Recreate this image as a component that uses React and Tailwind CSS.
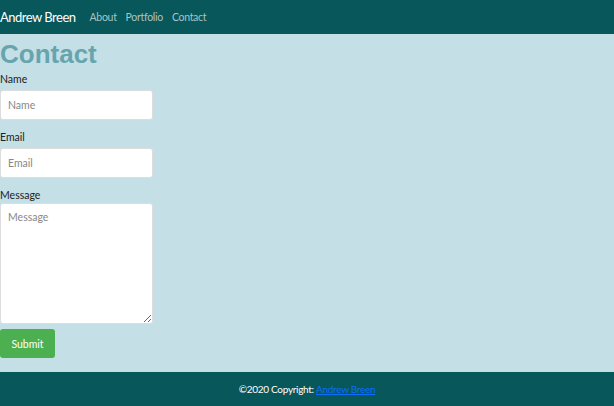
export default function App() {
  return (
    <div className="min-h-[406px] flex flex-col bg-[#c4dfe6] font-['Lato','Open_Sans',sans-serif]">
      {/* Nav */}
      <nav className="h-[34px] bg-[#07575b] flex items-center pt-[2px]">
        <span className="text-white text-[13px] tracking-[-0.5px]">Andrew Breen</span>
        <div className="flex gap-[9px] ml-[14px] text-[10.5px] tracking-[-0.3px] text-[#a8c4c5]">
          <a href="#">About</a>
          <a href="#">Portfolio</a>
          <a href="#">Contact</a>
        </div>
      </nav>

      {/* Form */}
      <main className="flex-1">
        <h1 className="mt-[5px] text-[26px] leading-[30px] font-black text-[#66a5ad] font-['Liberation_Sans',sans-serif]">
          Contact
        </h1>
        <form className="w-[153px] text-[10.5px] text-[#222]">
          <label className="block mt-[3px] leading-[14px]">Name</label>
          <input
            placeholder="Name"
            className="mt-[4px] w-full h-[30px] bg-white rounded-[3px] border border-[#ddd] px-[7px] text-[10.5px] placeholder:text-[#888] outline-none"
          />
          <label className="block mt-[10px] leading-[14px]">Email</label>
          <input
            placeholder="Email"
            className="mt-[4px] w-full h-[30px] bg-white rounded-[3px] border border-[#ddd] px-[7px] text-[10.5px] placeholder:text-[#888] outline-none"
          />
          <label className="block mt-[10px] leading-[14px]">Message</label>
          <textarea
            placeholder="Message"
            className="block mt-[1px] w-full h-[121px] bg-white rounded-[3px] border border-[#ddd] px-[7px] py-[6px] text-[10.5px] placeholder:text-[#888] outline-none"
          />
          <button
            type="button"
            className="block mt-[5px] w-[55px] h-[29px] pt-[2px] bg-[#4caf50] text-white rounded-[3px] text-[10.5px]"
          >
            Submit
          </button>
        </form>
      </main>

      {/* Footer */}
      <footer className="h-[34px] bg-[#07575b] flex items-center justify-center text-[10px] tracking-[-0.3px] text-white">
        ©2020 Copyright:&nbsp;
        <a href="#" className="text-[#0d6efd] underline">
          Andrew Breen
        </a>
      </footer>
    </div>
  );
}
